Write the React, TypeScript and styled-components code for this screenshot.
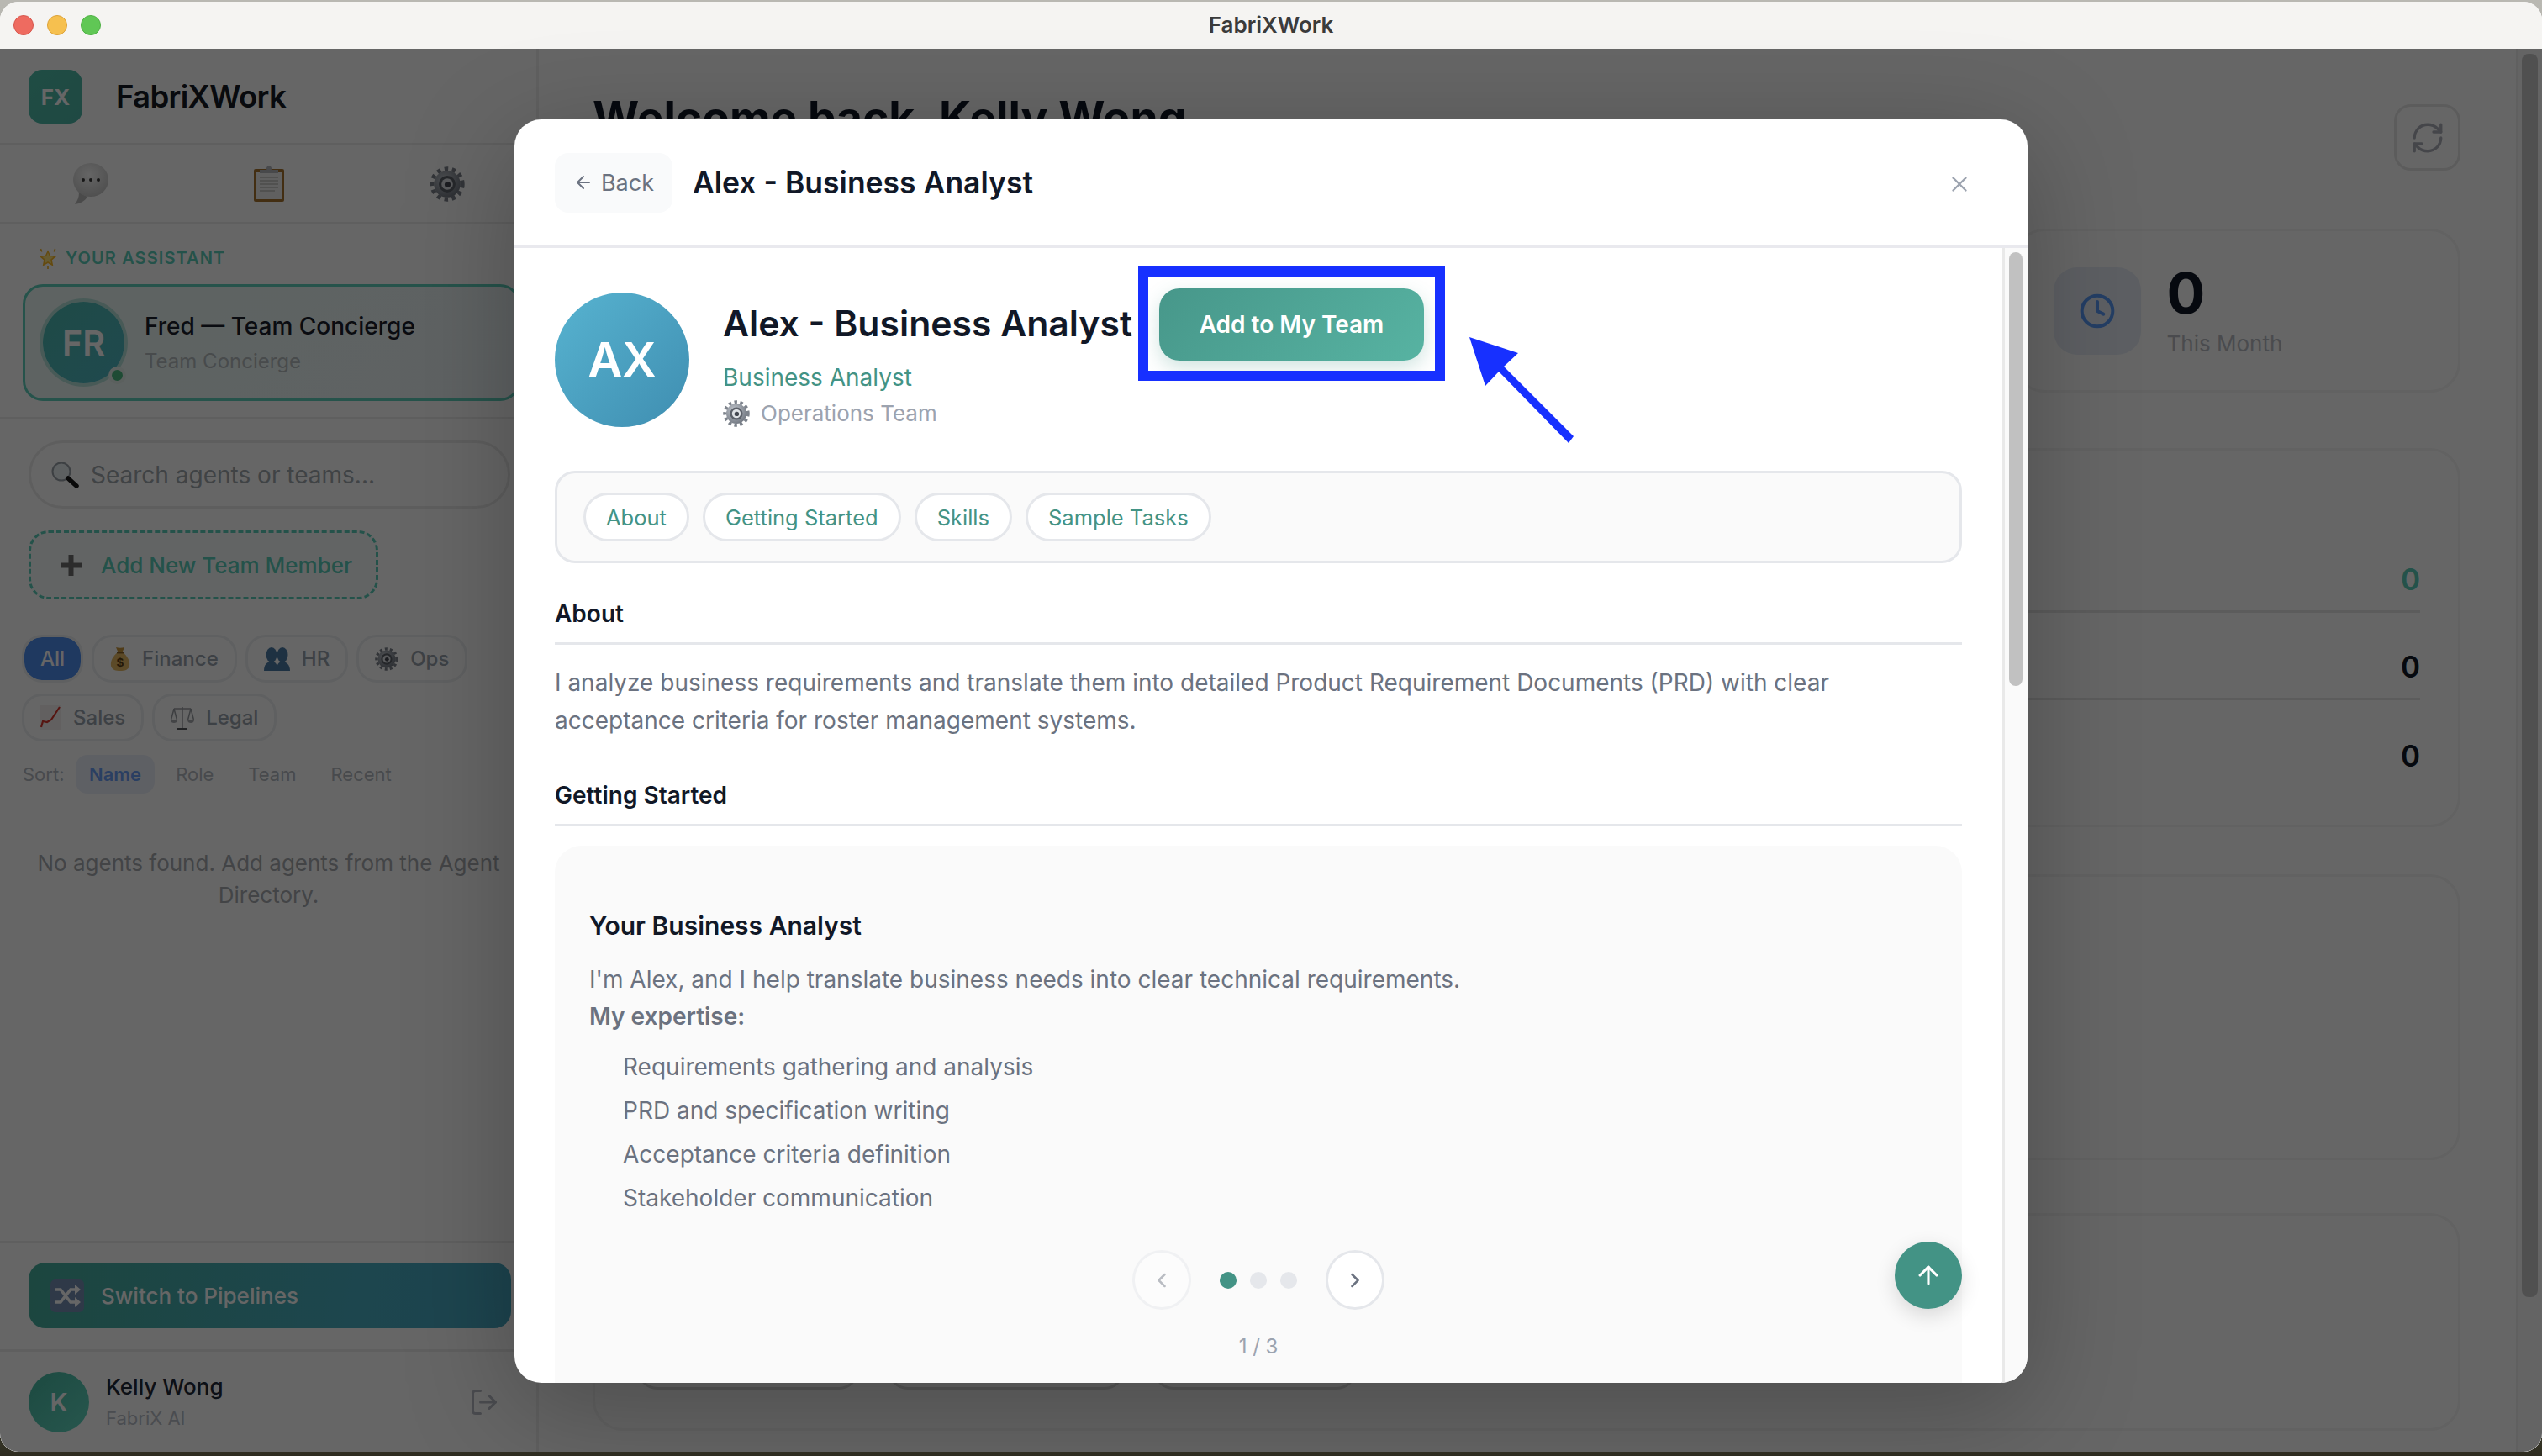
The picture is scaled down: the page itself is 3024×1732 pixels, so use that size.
import React from "react";
import styled, { createGlobalStyle } from "styled-components";
import { ArrowLeft, ArrowUp, ChevronLeft, ChevronRight, Clock, LogOut, RefreshCw, X } from "lucide-react";

const Global = createGlobalStyle`
  html, body { margin: 0; padding: 0; width: 3024px; height: 1732px; overflow: hidden; background: #2c2b22; }
  * { box-sizing: border-box; }
  body { font-family: Inter, "Liberation Sans", sans-serif; }
`;

const Desktop = styled.div`
  width: 3024px; height: 1732px; padding-top: 2px;
  background: linear-gradient(180deg, #b9b8b2 0, #b9b8b2 4px, #3a3a2a 1700px, #2e2c20 100%);
`;
const Win = styled.div`
  width: 3024px; height: 1725px; border-radius: 22px; overflow: hidden;
  display: flex; flex-direction: column; background: #fff;
`;
const TitleBar = styled.div`
  height: 56px; flex: none; background: #f5f4f2; position: relative;
  display: flex; align-items: center; justify-content: center; padding-bottom: 1px;
  font-size: 26px; font-weight: 600; color: #3b3b3b;
`;
const Lights = styled.div`
  position: absolute; left: 16px; top: 16px; display: flex; gap: 16px;
`;
const Light = styled.span<{ $c: string; $b: string }>`
  width: 24px; height: 24px; border-radius: 50%;
  background: ${(p) => p.$c}; border: 1px solid ${(p) => p.$b};
`;
const AppArea = styled.div`
  flex: 1; min-height: 0; position: relative; display: flex; background: #fff;
`;

/* ---------- sidebar ---------- */
const Sidebar = styled.aside`
  width: 641px; flex: none; border-right: 3px solid #efefef; display: flex; flex-direction: column;
  background: #fff; color: #111827;
`;
const LogoRow = styled.div`
  height: 115px; flex: none; display: flex; align-items: center; gap: 40px; padding: 2px 34px 0;
  border-bottom: 3px solid #eeeeee;
`;
const LogoMark = styled.div`
  width: 64px; height: 64px; border-radius: 16px; color: #fff; font-size: 26px; font-weight: 700;
  display: flex; align-items: center; justify-content: center; letter-spacing: 0;
  background: linear-gradient(135deg, #4ebfaa, #4fb6a8);
`;
const LogoText = styled.div`
  font-size: 36.6px; font-weight: 600; color: #161b24; letter-spacing: -0.7px;
`;
const TabsRow = styled.div`
  height: 94px; flex: none; display: grid; grid-template-columns: repeat(3, 1fr); align-items: center;
  justify-items: center; border-bottom: 3px solid #eeeeee; padding-left: 2px;
`;
const AssistantSection = styled.section`
  flex: none; height: 232px; padding: 28px 0 0 27px; border-bottom: 3px solid #eeeeee;
`;
const AssistantLabel = styled.div`
  display: flex; align-items: center; gap: 8px; padding-left: 17px; height: 24px; margin-bottom: 19px;
  font-size: 20px; font-weight: 600; letter-spacing: 1.1px; color: #5acdb9;
`;
const AssistantCard = styled.div`
  width: 592px; height: 139px; border-radius: 24px; border: 3px solid #5fd0bc;
  background: linear-gradient(135deg, #eaf8f5, #eef6f8);
  display: flex; align-items: center; gap: 24px; padding-left: 21px;
`;
const AssistantAvatar = styled.div`
  width: 97px; height: 97px; border-radius: 50%; position: relative; flex: none; color: #fff;
  background: linear-gradient(135deg, #4db9b0, #4fb7c4);
  box-shadow: 0 0 0 4px #b5e2da;
  display: flex; align-items: center; justify-content: center; font-size: 41px; font-weight: 600;
`;
const OnlineDot = styled.span`
  position: absolute; right: -2px; bottom: -1px; width: 21px; height: 21px; border-radius: 50%;
  background: #4cbb82; border: 4px solid #e4efec;
`;
const AssistantName = styled.div`
  font-size: 28px; font-weight: 500; color: #1a202b; line-height: 40px;
`;
const AssistantRole = styled.div`
  font-size: 24px; color: #b4bbbf; line-height: 36px; margin-top: 4px;
`;
const SearchBox = styled.div`
  margin: 25px 0 0 34px; width: 573px; height: 81px; flex: none; border-radius: 41px; border: 3px solid #ececec;
  display: flex; align-items: center; gap: 14px; padding-left: 23px;
  font-size: 28px; color: #a0a7ad;
`;
const AddButton = styled.div`
  margin: 26px 0 0 34px; width: 416px; height: 82px; flex: none; border-radius: 24px; border: 3px dashed #5acdb9;
  display: flex; align-items: center; gap: 23px; padding-left: 35px;
  font-size: 26px; font-weight: 500; color: #5acdb9; background: #f6fbfa;
`;
const Chips = styled.div`
  margin: 42px 0 0 26px; display: flex; flex-wrap: wrap; gap: 13px 10px; width: 560px; flex: none;
`;
const Chip = styled.div<{ $active?: boolean }>`
  height: 57px; border-radius: 24px; border: 3px solid #eef0f2; padding: 0 19px;
  display: flex; align-items: center; gap: 14px;
  font-size: 24px; font-weight: 500; color: ${(p) => (p.$active ? "#fff" : "#9aa2ac")};
  background: ${(p) => (p.$active ? "#4f8ff0" : "#fff")}; background-clip: padding-box;
`;
const SortRow = styled.div`
  margin: 16px 0 0 27px; display: flex; align-items: center; gap: 10px; height: 46px; flex: none;
  font-size: 22px; color: #b3b8c0;
`;
const SortLabel = styled.span` margin-right: 4px; `;
const SortItem = styled.span<{ $active?: boolean }>`
  height: 46px; border-radius: 14px; padding: 0 15.5px; display: flex; align-items: center;
  ${(p) => p.$active && "background: #ecf0fa; color: #6a9df5; font-weight: 600;"}
`;
const EmptyNote = styled.div`
  margin: 64px 20px 0 21px; text-align: center; font-size: 26px; line-height: 38px; color: #a7abb0;
`;
const SwitchSection = styled.div`
  margin-top: auto; flex: none; border-top: 3px solid #eeeeee; border-bottom: 3px solid #eeeeee; padding: 23px 0 25px 34px;
`;
const SwitchButton = styled.div`
  width: 574px; height: 78px; border-radius: 20px; display: flex; align-items: center; gap: 20px; padding-left: 26px;
  background: linear-gradient(100deg, #48ae9e, #49aec4 70%, #49abc6);
  font-size: 26px; font-weight: 500; color: #fff;
`;
const UserRow = styled.div`
  height: 119px; flex: none; display: flex; align-items: center; gap: 20px; padding: 0 44px 0 34px;
`;
const UserAvatar = styled.div`
  width: 72px; height: 72px; border-radius: 50%; flex: none; display: flex; align-items: center; justify-content: center;
  background: linear-gradient(135deg, #47b8a2, #62d8c2); color: #fff; font-size: 30px; font-weight: 600;
`;
const UserText = styled.div` flex: 1; `;
const UserName = styled.div` font-size: 26px; font-weight: 500; color: #1f2937; line-height: 36px; `;
const UserOrg = styled.div` font-size: 22px; color: #b9bec8; line-height: 32px; margin-top: 3px; `;
const LogoutIcon = styled(LogOut)` color: #b9bcc5; `;

/* ---------- main ---------- */
const Main = styled.main` flex: 1; min-width: 0; display: flex; background: #fff; `;
const MainColumn = styled.div` flex: 1; min-width: 0; padding: 48px 66px 0 64px; `;
const MainHead = styled.div`
  display: flex; justify-content: space-between; align-items: flex-start; height: 97px; margin-bottom: 69px;
`;
const Welcome = styled.h1`
  margin: 0; font-size: 53.3px; line-height: 68px; font-weight: 700; color: #111827;
`;
const RefreshButton = styled.div`
  margin-top: 18px; width: 79px; height: 79px; border-radius: 20px; border: 3px solid #e6e6e6;
  display: flex; align-items: center; justify-content: center; color: #acafb9;
`;
const StatsRow = styled.div`
  display: grid; grid-template-columns: repeat(4, 1fr); gap: 32px; margin-bottom: 66px;
`;
const StatCard = styled.div`
  height: 195px; border-radius: 36px; border: 3px solid #f4f4f4; padding: 0 44px;
  display: flex; align-items: center; gap: 31px;
`;
const StatIcon = styled.div`
  width: 104px; height: 104px; border-radius: 28px; background: #e8eef8; color: #5a9cfa;
  display: flex; align-items: center; justify-content: center; flex: none;
`;
const StatValue = styled.div` font-size: 68px; line-height: 68px; font-weight: 700; color: #111827; `;
const StatLabel = styled.div` font-size: 26px; color: #b9bcc3; line-height: 34px; margin-top: 10px; `;
const RowsCard = styled.div`
  height: 451px; border-radius: 36px; border: 3px solid #f4f4f4; padding: 89px 45px 0; margin-bottom: 56px;
`;
const ValueRow = styled.div<{ $last?: boolean }>`
  height: 104px; display: flex; align-items: center; justify-content: flex-end; padding-top: 27px;
  border-bottom: ${(p) => (p.$last ? "none" : "3px solid #e6e6e6")};
`;
const RowValue = styled.span<{ $accent?: boolean }>`
  font-size: 35px; font-weight: 600; color: ${(p) => (p.$accent ? "#5acdb9" : "#111827")};
`;
const BlankCard = styled.div`
  height: 340px; border-radius: 36px; border: 3px solid #f4f4f4; margin-bottom: 63px;
`;
const ActionsCard = styled.div`
  height: 259px; border-radius: 36px; border: 3px solid #f4f4f4; padding: 0 50px; display: flex; align-items: flex-end; gap: 34px;
  padding-bottom: 46px;
`;
const ActionTile = styled.div<{ $w: number }>`
  width: ${(p) => p.$w}px; height: 120px; border-radius: 24px; border: 3px solid #d9d9d9;
`;
const MainGutter = styled.div`
  width: 31px; flex: none; border-left: 3px solid #f0f0f0; background: #fafafa; padding: 6px 5px 0 4px;
`;
const MainThumb = styled.div` height: 1479px; border-radius: 8px; background: #c8c8c8; `;

/* ---------- modal ---------- */
const Overlay = styled.div`
  position: absolute; inset: 0; background: rgba(0, 0, 0, 0.6); padding-top: 2px;
  display: flex; align-items: center; justify-content: center;
`;
const Modal = styled.div`
  width: 1800px; height: 1503px; background: #fff; border-radius: 32px; position: relative; overflow: hidden;
  display: flex; flex-direction: column; color: #111827;
  box-shadow: 0 30px 130px rgba(0, 0, 0, 0.26);
`;
const ModalHeader = styled.header`
  height: 153px; flex: none; border-bottom: 3px solid #e9e9ee; display: flex; align-items: center; gap: 24px;
  padding: 0 66px 0 48px;
`;
const BackButton = styled.div`
  width: 140px; height: 71px; border-radius: 16px; background: #f9fafb; color: #6b7280; font-size: 27px;
  display: flex; align-items: center; justify-content: center; gap: 9px;
`;
const ModalTitle = styled.h2` margin: 0; font-size: 35.5px; font-weight: 600; color: #111827; flex: 1; `;
const CloseIcon = styled(X)` color: #9ca3af; margin-top: 3px; `;
const ModalBody = styled.div` flex: 1; min-height: 0; display: flex; `;
const Content = styled.div`
  flex: 1; min-width: 0; overflow: hidden; padding: 48px 48px 0 48px;
`;
const Gutter = styled.div`
  width: 30px; flex: none; border-left: 3px solid #e9e9e9; background: #fafafa; padding: 5px 6px 0 5px;
`;
const Thumb = styled.div` height: 516px; border-radius: 8px; background: #c1c1c1; `;
const Hero = styled.div` display: flex; align-items: center; gap: 40px; `;
const HeroAvatar = styled.div`
  width: 160px; height: 160px; border-radius: 50%; flex: none; color: #fff; font-size: 56px; font-weight: 600;
  display: flex; align-items: center; justify-content: center;
  background: linear-gradient(135deg, #57b3d0, #3f8eb1);
`;
const HeroInfo = styled.div` display: flex; flex-direction: column; `;
const NameRow = styled.div` display: flex; align-items: center; gap: 33px; height: 86px; `;
const HeroName = styled.div`
  font-size: 42.7px; font-weight: 600; color: #111827; white-space: nowrap; width: 486px; padding-bottom: 3px;
`;
const PrimaryButton = styled.div`
  width: 315px; height: 86px; border-radius: 24px; color: #fff; font-size: 28px; font-weight: 600;
  display: flex; align-items: center; justify-content: center;
  background: linear-gradient(135deg, #47978a, #57b3a2);
  box-shadow: 0 8px 22px rgba(67, 147, 133, 0.25);
`;
const HeroRole = styled.div` font-size: 28px; line-height: 40px; color: #439385; `;
const HeroTeam = styled.div`
  font-size: 26px; line-height: 40px; color: #9ca3af; margin-top: 3px; display: flex; align-items: center; gap: 13px;
`;
const SectionNav = styled.nav`
  margin-top: 48px; height: 110px; border: 3px solid #e5e7eb; border-radius: 24px; background: #fafafa;
  display: flex; align-items: center; gap: 16px; padding: 0 31px;
`;
const NavPill = styled.div`
  height: 58px; border-radius: 29px; border: 3px solid #e5e7eb; background: #fff; padding: 0 24px;
  display: flex; align-items: center; font-size: 25.5px; color: #439385;
`;
const SectionTitle = styled.h3<{ $top: number }>`
  margin: ${(p) => p.$top}px 0 0; font-size: 28px; font-weight: 600; line-height: 36px; color: #111827;
  padding-bottom: 16px; border-bottom: 3px solid #e5e7eb;
`;
const Paragraph = styled.p`
  margin: 23px 0 0; font-size: 28px; line-height: 45px; color: #6b7280;
`;
const GuideCard = styled.div`
  margin-top: 23px; background: #fafafa; border-radius: 32px; padding: 75px 41px 60px;
`;
const GuideTitle = styled.h4`
  margin: 0; font-size: 30px; font-weight: 600; line-height: 40px; color: #111827;
`;
const GuideText = styled.div`
  margin-top: 22px; font-size: 28px; line-height: 44px; color: #6b7280;
`;
const GuideStrong = styled.div` font-weight: 600; `;
const GuideList = styled.ul` margin: 12px 0 0; padding: 0 0 0 40px; list-style: none; `;
const GuideItem = styled.li` font-size: 28px; line-height: 52px; color: #6b7280; `;
const Pager = styled.div`
  margin-top: 36px; display: flex; align-items: center; justify-content: center; gap: 34px;
`;
const PagerButton = styled.div<{ $off?: boolean }>`
  width: 70px; height: 71px; border-radius: 50%; background: #fff; border: 3px solid #e5e7eb;
  display: flex; align-items: center; justify-content: center; color: #6b7280;
  opacity: ${(p) => (p.$off ? 0.45 : 1)};
`;
const Dots = styled.div` display: flex; gap: 16px; `;
const Dot = styled.span<{ $on?: boolean }>`
  width: 20px; height: 20px; border-radius: 50%; background: ${(p) => (p.$on ? "#439385" : "#e5e7eb")};
`;
const Counter = styled.div`
  margin-top: 29px; text-align: center; font-size: 24px; line-height: 30px; color: #9ca3af;
`;
const Fab = styled.div`
  position: absolute; left: 1642px; top: 1335px; width: 80px; height: 80px; border-radius: 50%; background: #439385;
  display: flex; align-items: center; justify-content: center; color: #fff;
  box-shadow: 0 8px 24px rgba(0, 0, 0, 0.14);
`;
const Annotation = styled.svg`
  position: absolute; left: 0; top: 0; pointer-events: none;
`;

/* ---------- drawn emoji ---------- */
const GearEmoji = ({ size }: { size: number }) => (
  <svg width={size} height={size} viewBox="0 0 40 40">
    <defs>
      <radialGradient id="gearBody" cx="40%" cy="35%" r="75%">
        <stop offset="0" stopColor="#c4c9d0" />
        <stop offset="1" stopColor="#6a707a" />
      </radialGradient>
    </defs>
    <circle cx="20" cy="20" r="17.2" fill="none" stroke="#7d838c" strokeWidth="5" strokeDasharray="4.3 4.3" />
    <circle cx="20" cy="20" r="15" fill="url(#gearBody)" />
    <circle cx="20" cy="20" r="9.5" fill="#5c616a" />
    <circle cx="20" cy="20" r="6.5" fill="#dfe2e6" />
    <circle cx="20.5" cy="20.5" r="3.4" fill="#444851" />
  </svg>
);
const BubbleEmoji = () => (
  <svg width="44" height="52" viewBox="0 0 44 52">
    <defs>
      <radialGradient id="bub" cx="45%" cy="35%" r="70%">
        <stop offset="0" stopColor="#fdfdfd" />
        <stop offset="1" stopColor="#c4c4c4" />
      </radialGradient>
    </defs>
    <path d="M8 36 C8 42 6 46 3 50 C10 49 15 46 18 41 Z" fill="#b9b9b9" />
    <ellipse cx="22" cy="21" rx="21" ry="20" fill="url(#bub)" />
    <circle cx="13" cy="21" r="2" fill="#3b3b3b" />
    <circle cx="22" cy="21" r="2" fill="#3b3b3b" />
    <circle cx="31" cy="21" r="2" fill="#3b3b3b" />
  </svg>
);
const ClipboardEmoji = () => (
  <svg width="38" height="44" viewBox="0 0 38 44">
    <rect x="1" y="4" width="36" height="39" rx="2" fill="#a8742f" />
    <rect x="4" y="8" width="30" height="32" fill="#f1f1ef" />
    <path d="M8 14h22M8 18h22M8 22h22M8 26h22M8 30h18" stroke="#bdbdbd" strokeWidth="1.4" />
    <path d="M8 5h22v4H8z" fill="#b4b6bb" />
    <circle cx="19" cy="3.5" r="3" fill="#b4b6bb" />
  </svg>
);
const StarEmoji = () => (
  <svg width="26" height="26" viewBox="0 0 24 24">
    <path d="M12 3l2.8 6.2 6.7.7-5 4.5 1.4 6.6-5.9-3.4-5.9 3.4 1.4-6.6-5-4.5 6.7-.7z" fill="#f9b928" />
    <path d="M12 6l1.8 4.2 4.4.5-3.3 3 .9 4.3-3.8-2.2-3.8 2.2.9-4.3-3.3-3 4.4-.5z" fill="#ffe37a" />
    <path d="M4 2l1.5 3M20 2l-1.5 3M12 24v-3" stroke="#f5b82e" strokeWidth="1.6" />
  </svg>
);
const MagnifierEmoji = () => (
  <svg width="34" height="32" viewBox="0 0 34 32">
    <circle cx="13" cy="12" r="10.5" fill="#e8eff3" stroke="#9aa1a8" strokeWidth="2" />
    <path d="M21 20l10 9" stroke="#1b1b1b" strokeWidth="5.5" strokeLinecap="round" />
  </svg>
);
const PlusEmoji = () => (
  <svg width="25" height="25" viewBox="0 0 25 25">
    <path d="M9.5 0h6v9.5H25v6h-9.5V25h-6v-9.5H0v-6h9.5z" fill="#6f6f6f" />
  </svg>
);
const MoneyEmoji = () => (
  <svg width="24" height="30" viewBox="0 0 24 30">
    <path d="M7 1c3 1 7 1 10 0l-3 7h-4z" fill="#c8963c" />
    <path d="M9 7h6c5 4 9 10 8 16-1 5-6 6-11 6S2 28 1 23C0 17 4 11 9 7z" fill="#e5b965" />
    <rect x="8" y="6" width="8" height="2.4" fill="#8a6328" />
    <text x="12" y="24" textAnchor="middle" fontSize="15" fontWeight="700" fontFamily="Liberation Sans" fill="#5a3e14">$</text>
  </svg>
);
const BustsEmoji = () => (
  <svg width="31" height="30" viewBox="0 0 31 30">
    <g fill="#4d7ca6">
      <ellipse cx="9" cy="10" rx="6.5" ry="9" />
      <path d="M0 29c0-7 3-11 9-11s7 4 7 11z" />
      <ellipse cx="22" cy="10" rx="6.5" ry="9" />
      <path d="M15 29c0-7 2-11 7-11s9 4 9 11z" />
    </g>
  </svg>
);
const ChartEmoji = () => (
  <svg width="25" height="29" viewBox="0 0 25 29">
    <rect width="25" height="29" fill="#f4f1f1" />
    <path d="M1 26l2-7 5 1 5-3L23 2" fill="none" stroke="#d8352c" strokeWidth="2.2" />
  </svg>
);
const ScalesEmoji = () => (
  <svg width="28" height="30" viewBox="0 0 28 30">
    <g stroke="#9a9da2" strokeWidth="1.5" fill="none">
      <path d="M14 2v25M4 4h20" />
      <path d="M4 4L0.6 17M4 4l3.4 13M24 4l-3.4 13M24 4l3.4 13" />
    </g>
    <path d="M0 17h8c0 3-2 4-4 4s-4-1-4-4zM20 17h8c0 3-2 4-4 4s-4-1-4-4z" fill="#a7aaaf" />
    <path d="M8 29h12v-2H8z" fill="#55585c" />
  </svg>
);
const ShuffleEmoji = () => (
  <svg width="40" height="39" viewBox="0 0 40 39">
    <rect width="40" height="39" rx="6" fill="#7690b4" />
    <path d="M6 12h6l12 15h6M6 27h6l12-15h6" fill="none" stroke="#fff" strokeWidth="3.6" />
    <path d="M29 6l7 6-7 6zM29 21l7 6-7 6z" fill="#fff" />
  </svg>
);

export default function App() {
  return (
    <Desktop>
      <Global />
      <Win>
        <TitleBar>
          <Lights>
            <Light $c="#ee6b60" $b="#d6574e" />
            <Light $c="#f6c04f" $b="#dca239" />
            <Light $c="#60c755" $b="#4fb045" />
          </Lights>
          FabriXWork
        </TitleBar>
        <AppArea>
          <Sidebar>
            <LogoRow>
              <LogoMark>FX</LogoMark>
              <LogoText>FabriXWork</LogoText>
            </LogoRow>
            <TabsRow>
              <BubbleEmoji />
              <ClipboardEmoji />
              <GearEmoji size={42} />
            </TabsRow>
            <AssistantSection>
              <AssistantLabel><StarEmoji />YOUR ASSISTANT</AssistantLabel>
              <AssistantCard>
                <AssistantAvatar>FR<OnlineDot /></AssistantAvatar>
                <div>
                  <AssistantName>Fred — Team Concierge</AssistantName>
                  <AssistantRole>Team Concierge</AssistantRole>
                </div>
              </AssistantCard>
            </AssistantSection>
            <SearchBox><MagnifierEmoji />Search agents or teams...</SearchBox>
            <AddButton><PlusEmoji />Add New Team Member</AddButton>
            <Chips>
              <Chip $active>All</Chip>
              <Chip><MoneyEmoji />Finance</Chip>
              <Chip><BustsEmoji />HR</Chip>
              <Chip><GearEmoji size={28} />Ops</Chip>
              <Chip><ChartEmoji />Sales</Chip>
              <Chip><ScalesEmoji />Legal</Chip>
            </Chips>
            <SortRow>
              <SortLabel>Sort:</SortLabel>
              <SortItem $active>Name</SortItem>
              <SortItem>Role</SortItem>
              <SortItem>Team</SortItem>
              <SortItem>Recent</SortItem>
            </SortRow>
            <EmptyNote>No agents found. Add agents from the Agent Directory.</EmptyNote>
            <SwitchSection>
              <SwitchButton><ShuffleEmoji />Switch to Pipelines</SwitchButton>
            </SwitchSection>
            <UserRow>
              <UserAvatar>K</UserAvatar>
              <UserText>
                <UserName>Kelly Wong</UserName>
                <UserOrg>FabriX AI</UserOrg>
              </UserText>
              <LogoutIcon size={36} strokeWidth={2} />
            </UserRow>
          </Sidebar>
          <Main>
            <MainColumn>
              <MainHead>
                <Welcome>Welcome back, Kelly Wong</Welcome>
                <RefreshButton><RefreshCw size={42} strokeWidth={1.9} /></RefreshButton>
              </MainHead>
              <StatsRow>
                <StatCard />
                <StatCard />
                <StatCard />
                <StatCard>
                  <StatIcon><Clock size={44} strokeWidth={2.2} /></StatIcon>
                  <div>
                    <StatValue>0</StatValue>
                    <StatLabel>This Month</StatLabel>
                  </div>
                </StatCard>
              </StatsRow>
              <RowsCard>
                <ValueRow><RowValue $accent>0</RowValue></ValueRow>
                <ValueRow><RowValue>0</RowValue></ValueRow>
                <ValueRow $last><RowValue>0</RowValue></ValueRow>
              </RowsCard>
              <BlankCard />
              <ActionsCard>
                <ActionTile $w={264} />
                <ActionTile $w={282} />
                <ActionTile $w={242} />
              </ActionsCard>
            </MainColumn>
            <MainGutter><MainThumb /></MainGutter>
          </Main>
          <Overlay>
            <Modal>
              <ModalHeader>
                <BackButton><ArrowLeft size={24} strokeWidth={2} />Back</BackButton>
                <ModalTitle>Alex - Business Analyst</ModalTitle>
                <CloseIcon size={30} strokeWidth={1.9} />
              </ModalHeader>
              <ModalBody>
                <Content>
                  <Hero>
                    <HeroAvatar>AX</HeroAvatar>
                    <HeroInfo>
                      <NameRow>
                        <HeroName>Alex - Business Analyst</HeroName>
                        <PrimaryButton>Add to My Team</PrimaryButton>
                      </NameRow>
                      <HeroRole>Business Analyst</HeroRole>
                      <HeroTeam><GearEmoji size={32} />Operations Team</HeroTeam>
                    </HeroInfo>
                  </Hero>
                  <SectionNav>
                    <NavPill>About</NavPill>
                    <NavPill>Getting Started</NavPill>
                    <NavPill>Skills</NavPill>
                    <NavPill>Sample Tasks</NavPill>
                  </SectionNav>
                  <SectionTitle $top={42}>About</SectionTitle>
                  <Paragraph>
                    I analyze business requirements and translate them into detailed Product Requirement Documents (PRD) with clear
                    <br />
                    acceptance criteria for roster management systems.
                  </Paragraph>
                  <SectionTitle $top={48}>Getting Started</SectionTitle>
                  <GuideCard>
                    <GuideTitle>Your Business Analyst</GuideTitle>
                    <GuideText>
                      I'm Alex, and I help translate business needs into clear technical requirements.
                      <GuideStrong>My expertise:</GuideStrong>
                    </GuideText>
                    <GuideList>
                      <GuideItem>Requirements gathering and analysis</GuideItem>
                      <GuideItem>PRD and specification writing</GuideItem>
                      <GuideItem>Acceptance criteria definition</GuideItem>
                      <GuideItem>Stakeholder communication</GuideItem>
                    </GuideList>
                    <Pager>
                      <PagerButton $off><ChevronLeft size={28} strokeWidth={2.2} /></PagerButton>
                      <Dots><Dot $on /><Dot /><Dot /></Dots>
                      <PagerButton><ChevronRight size={28} strokeWidth={2.2} /></PagerButton>
                    </Pager>
                    <Counter>1 / 3</Counter>
                  </GuideCard>
                </Content>
                <Gutter><Thumb /></Gutter>
              </ModalBody>
              <Fab><ArrowUp size={34} strokeWidth={2.2} /></Fab>
              <Annotation width="1800" height="1503" viewBox="0 0 1800 1503">
                <rect x="748" y="181" width="353" height="124" fill="none" stroke="#1730ff" strokeWidth="12" />
                <polygon points="1136,259 1194,278 1177,294 1260,377 1254,385 1171,300 1155,317" fill="#1730ff" />
              </Annotation>
            </Modal>
          </Overlay>
        </AppArea>
      </Win>
    </Desktop>
  );
}
